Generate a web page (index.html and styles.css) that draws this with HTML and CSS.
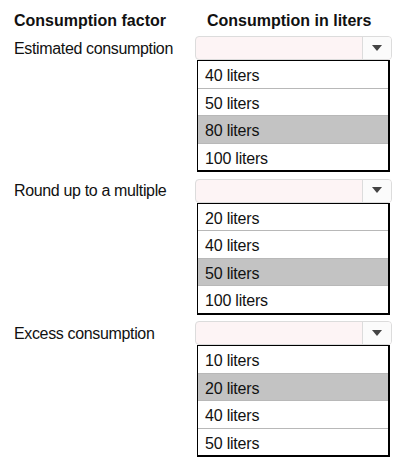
FILE: index.html
```html
<!DOCTYPE html>
<html lang="en">
<head>
<meta charset="UTF-8">
<meta name="viewport" content="width=device-width, initial-scale=1.0">
<title>Consumption</title>
<link rel="stylesheet" href="styles.css">
</head>
<body>
<div class="sheet">
  <div class="head">
    <div class="head-cell">Consumption factor</div>
    <div class="head-cell second">Consumption in liters</div>
  </div>

  <div class="group">
    <div class="label">Estimated consumption</div>
    <div class="dropdown"><span class="field"></span><span class="arrow"><i></i></span></div>
    <ul class="options">
      <li>40 liters</li>
      <li>50 liters</li>
      <li class="picked">80 liters</li>
      <li>100 liters</li>
    </ul>
  </div>

  <div class="group">
    <div class="label">Round up to a multiple</div>
    <div class="dropdown"><span class="field"></span><span class="arrow"><i></i></span></div>
    <ul class="options">
      <li>20 liters</li>
      <li>40 liters</li>
      <li class="picked">50 liters</li>
      <li>100 liters</li>
    </ul>
  </div>

  <div class="group">
    <div class="label">Excess consumption</div>
    <div class="dropdown"><span class="field"></span><span class="arrow"><i></i></span></div>
    <ul class="options">
      <li>10 liters</li>
      <li class="picked">20 liters</li>
      <li>40 liters</li>
      <li>50 liters</li>
    </ul>
  </div>
</div>
</body>
</html>
```

FILE: styles.css
```css
body {
  margin: 0;
  background-color: #fff;
  font-family: "Liberation Sans", Arial, sans-serif;
  font-size: 16px;
  color: #111;
}

.sheet {
  padding: 12px 0 0 14px;
}

.head {
  display: grid;
  grid-template-columns: 181px 197px;
  font-weight: bold;
  line-height: 18px;
  margin-bottom: 6px;
}

.head-cell.second {
  padding-left: 12px;
}

.group {
  display: grid;
  grid-template-columns: 181px 197px;
  margin-bottom: 6.5px;
}

.label {
  grid-column: 1;
  grid-row: 1;
  align-self: center;
  line-height: 18px;
  padding-top: 1px;
  letter-spacing: -0.35px;
}

.dropdown {
  grid-column: 2;
  grid-row: 1;
  display: flex;
  height: 24px;
  box-sizing: border-box;
  border: 1px solid #dcdcdc;
  border-radius: 4px;
  background-color: #fdf4f5;
  overflow: hidden;
}

.dropdown .field {
  flex: 1;
}

.dropdown .arrow {
  width: 28px;
  border-left: 1px solid #dcdcdc;
  background-color: #fbfbfb;
  display: flex;
  align-items: center;
  justify-content: center;
}

.dropdown .arrow i {
  width: 0;
  height: 0;
  border-left: 5px solid transparent;
  border-right: 5px solid transparent;
  border-top: 6px solid #444;
  margin-top: -1px;
}

.options {
  grid-column: 2;
  grid-row: 2;
  list-style: none;
  margin: 0 0 0 2px;
  padding: 0;
  width: 193px;
  box-sizing: border-box;
  border: 1px solid #000;
  border-right-width: 2px;
  border-bottom-width: 2px;
}

.options li {
  height: 26.5px;
  line-height: 29px;
  padding-left: 7px;
  border-top: 1px solid #b8b8b8;
  letter-spacing: -0.2px;
}

.options li:first-child {
  border-top: none;
}

.options li.picked {
  background-color: #c3c3c3;
}
```
